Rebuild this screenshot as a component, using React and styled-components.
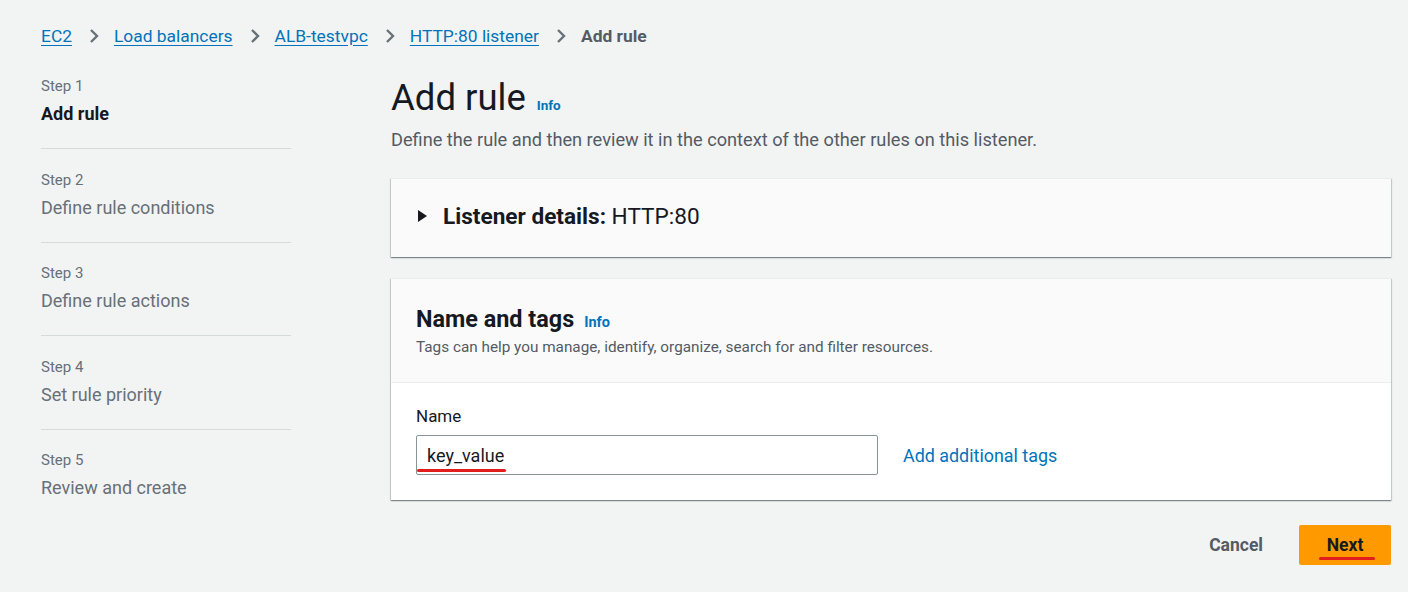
import React from 'react'
import styled, { createGlobalStyle } from 'styled-components'

const GlobalStyle = createGlobalStyle`
  body {
    margin: 0;
    background: #f2f3f3;
    font-family: Roboto, "Liberation Sans", Arial, sans-serif;
    color: #16191f;
  }
`

export const Page = styled.div`
  width: 1408px;
  height: 592px;
  padding: 0 17px 0 41px;
  box-sizing: border-box;
  overflow: hidden;
`
export const Crumbs = styled.nav`
  display: flex;
  align-items: center;
  height: 72px;
  font-size: 17.4px;
`
export const CrumbLink = styled.a`
  color: #0073bb;
  text-decoration: underline;
  text-underline-offset: 3px;
`
export const CrumbSep = styled.span`
  display: flex;
  margin: 0 15px 0 17px;
`
export const CrumbCurrent = styled.span`
  color: #545b64;
  font-weight: 700;
`
export const Layout = styled.div`
  display: grid;
  grid-template-columns: 250px 1000px;
  column-gap: 100px;
`
export const Steps = styled.ol`
  list-style: none;
  margin: 0;
  padding: 4px 0 0;
`
export const StepItem = styled.li`
  padding: 0 0 18px;
  margin-bottom: 20.5px;
  border-bottom: ${({ last }) => (last ? 'none' : '1px solid #d5dbdb')};
`
export const StepNum = styled.div`
  font-size: 15px;
  line-height: 20px;
  color: #687078;
`
export const StepName = styled.div`
  margin-top: 2px;
  font-size: 18px;
  line-height: 32px;
  color: ${({ active }) => (active ? '#16191f' : '#687078')};
  font-weight: ${({ active }) => (active ? 700 : 400)};
`
export const Main = styled.main`
  display: flex;
  flex-direction: column;
`
export const TitleRow = styled.div`
  display: flex;
  align-items: baseline;
  gap: 11px;
  margin-top: 3px;
`
export const PageTitle = styled.h1`
  margin: 0;
  font-size: 36.5px;
  font-weight: 400;
  line-height: 46px;
`
export const Info = styled.a`
  color: #0073bb;
  font-weight: 700;
  font-size: ${({ small }) => (small ? '13.5px' : '14.5px')};
`
export const Lead = styled.p`
  margin: 8px 0 28px;
  font-size: 18.2px;
  color: #545b64;
`
export const Panel = styled.section`
  background: #fff;
  box-shadow: 0 1px 1px 0 rgba(0, 28, 36, 0.3), 1px 1px 1px 0 rgba(0, 28, 36, 0.15),
    -1px 1px 1px 0 rgba(0, 28, 36, 0.15);
  border-top: 1px solid #eaeded;
  margin-bottom: ${({ gap }) => gap}px;
`
export const Expander = styled.div`
  display: flex;
  align-items: center;
  gap: 16px;
  height: 78px;
  box-sizing: border-box;
  padding: 0 26px 4px;
  background: #fafafa;
  font-size: 22.6px;
`
export const PanelHead = styled.header`
  background: #fafafa;
  border-bottom: 1px solid #eaeded;
  padding: 24px 25px 26px;
`
export const HeadRow = styled.div`
  display: flex;
  align-items: baseline;
  gap: 10px;
`
export const H2 = styled.h2`
  margin: 0;
  font-size: 23.4px;
  font-weight: 700;
  line-height: 32px;
`
export const HeadDesc = styled.div`
  font-size: 15.3px;
  color: #545b64;
  margin-top: 3px;
`
export const PanelBody = styled.div`
  padding: 23px 25px 25px;
`
export const Label = styled.div`
  font-size: 17px;
  margin-bottom: 9px;
`
export const FieldRow = styled.div`
  display: flex;
  align-items: center;
  gap: 25px;
`
export const InputBox = styled.div`
  position: relative;
  width: 462px;
  height: 40px;
  box-sizing: border-box;
  border: 1px solid #879596;
  border-radius: 2px;
  background: #fff;
  display: flex;
  align-items: center;
  padding-left: 10px;
  font-size: 18px;
`
export const Mark = styled.span`
  position: relative;
  &::after {
    content: '';
    position: absolute;
    left: ${({ l }) => l}px;
    right: ${({ r }) => r}px;
    bottom: ${({ b }) => b}px;
    height: 3px;
    border-radius: 2px;
    background: #e31c1c;
  }
`
export const TextLink = styled.a`
  color: #0073bb;
  font-size: 17.9px;
`
export const Actions = styled.div`
  display: flex;
  justify-content: flex-end;
  align-items: center;
  gap: 36px;
  margin-top: 25px;
`
export const Cancel = styled.button`
  border: none;
  background: none;
  color: #545b64;
  font: 700 17.5px Roboto, "Liberation Sans", Arial, sans-serif;
  padding: 0;
`
export const Primary = styled.button`
  border: none;
  background: #ff9900;
  border-radius: 2px;
  width: 92px;
  height: 40px;
  color: #16191f;
  font: 700 17.5px Roboto, "Liberation Sans", Arial, sans-serif;
`

const Chevron = () => (
  <svg width="10" height="16" viewBox="0 0 10 16">
    <path d="M2 2l6 6-6 6" fill="none" stroke="#687078" strokeWidth="2.4" />
  </svg>
)

const steps = ['Add rule', 'Define rule conditions', 'Define rule actions', 'Set rule priority', 'Review and create']

export default function App() {
  return (
    <Page>
      <GlobalStyle />
      <Crumbs>
        <CrumbLink>EC2</CrumbLink>
        <CrumbSep><Chevron /></CrumbSep>
        <CrumbLink>Load balancers</CrumbLink>
        <CrumbSep><Chevron /></CrumbSep>
        <CrumbLink>ALB-testvpc</CrumbLink>
        <CrumbSep><Chevron /></CrumbSep>
        <CrumbLink>HTTP:80 listener</CrumbLink>
        <CrumbSep><Chevron /></CrumbSep>
        <CrumbCurrent>Add rule</CrumbCurrent>
      </Crumbs>
      <Layout>
        <Steps>
          {steps.map((s, i) => (
            <StepItem key={s} last={i === steps.length - 1}>
              <StepNum>Step {i + 1}</StepNum>
              <StepName active={i === 0}>{s}</StepName>
            </StepItem>
          ))}
        </Steps>
        <Main>
          <TitleRow>
            <PageTitle>Add rule</PageTitle>
            <Info small>Info</Info>
          </TitleRow>
          <Lead>Define the rule and then review it in the context of the other rules on this listener.</Lead>
          <Panel gap={21}>
            <Expander>
              <svg width="10" height="12" viewBox="0 0 10 12">
                <path d="M1 0l9 6-9 6z" fill="#16191f" />
              </svg>
              <span><b>Listener details:</b> HTTP:80</span>
            </Expander>
          </Panel>
          <Panel gap={0}>
            <PanelHead>
              <HeadRow>
                <H2>Name and tags</H2>
                <Info>Info</Info>
              </HeadRow>
              <HeadDesc>Tags can help you manage, identify, organize, search for and filter resources.</HeadDesc>
            </PanelHead>
            <PanelBody>
              <Label>Name</Label>
              <FieldRow>
                <InputBox>
                  <Mark l={-10} r={-2} b={-6}>key_value</Mark>
                </InputBox>
                <TextLink>Add additional tags</TextLink>
              </FieldRow>
            </PanelBody>
          </Panel>
          <Actions>
            <Cancel>Cancel</Cancel>
            <Primary>
              <Mark l={-8} r={-12} b={-5}>Next</Mark>
            </Primary>
          </Actions>
        </Main>
      </Layout>
    </Page>
  )
}
